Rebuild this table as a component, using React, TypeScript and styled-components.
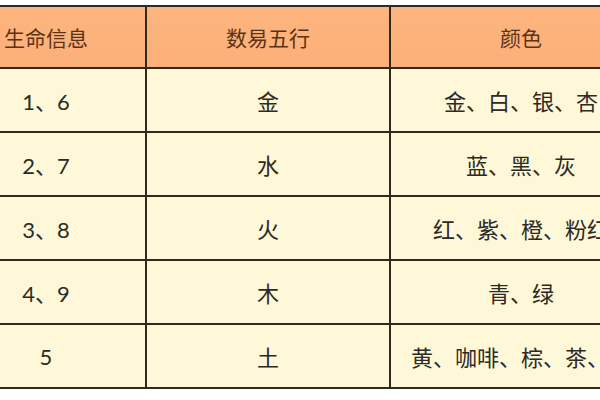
import React from 'react';
import styled, { createGlobalStyle } from 'styled-components';

const GlobalStyle = createGlobalStyle`
  html, body {
    margin: 0;
    padding: 0;
    background: #ffffff;
    overflow: hidden;
  }
`;

const Page = styled.div`
  width: 600px;
  height: 400px;
  overflow: hidden;
  padding-top: 5px;
  box-sizing: border-box;
`;

const TableGrid = styled.div`
  margin-left: -55px;
  width: 704px;
  display: grid;
  grid-template-columns: 198px 242px 260px;
  grid-template-rows: 60px repeat(5, 62px);
  gap: 2px;
  padding: 2px;
  box-sizing: border-box;
  background: #2e2a20;
  font-family: 'Lato', 'Noto Sans CJK SC', sans-serif;
`;

const HeadCell = styled.div`
  background: linear-gradient(#fdb47e, #fcb079);
  color: #5b3216;
  font-size: 21px;
  font-family: 'Noto Sans CJK SC', sans-serif;
  display: flex;
  align-items: center;
  justify-content: center;
  white-space: nowrap;
  overflow: hidden;
`;

const Cell = styled.div`
  background: #fff8d8;
  color: #2b2a26;
  font-size: 22px;
  display: flex;
  align-items: center;
  justify-content: center;
  white-space: nowrap;
  overflow: visible;
`;

const rows = [
  { num: '1、6', elem: '金', colors: '金、白、银、杏' },
  { num: '2、7', elem: '水', colors: '蓝、黑、灰' },
  { num: '3、8', elem: '火', colors: '红、紫、橙、粉红' },
  { num: '4、9', elem: '木', colors: '青、绿' },
  { num: '5', elem: '土', colors: '黄、咖啡、棕、茶、米' },
];

const App: React.FC = () => {
  return (
    <Page>
      <GlobalStyle />
      <TableGrid>
        <HeadCell>生命信息</HeadCell>
        <HeadCell>数易五行</HeadCell>
        <HeadCell>颜色</HeadCell>
        {rows.map((row) => (
          <React.Fragment key={row.num}>
            <Cell>{row.num}</Cell>
            <Cell>{row.elem}</Cell>
            <Cell>{row.colors}</Cell>
          </React.Fragment>
        ))}
      </TableGrid>
    </Page>
  );
};

export default App;
